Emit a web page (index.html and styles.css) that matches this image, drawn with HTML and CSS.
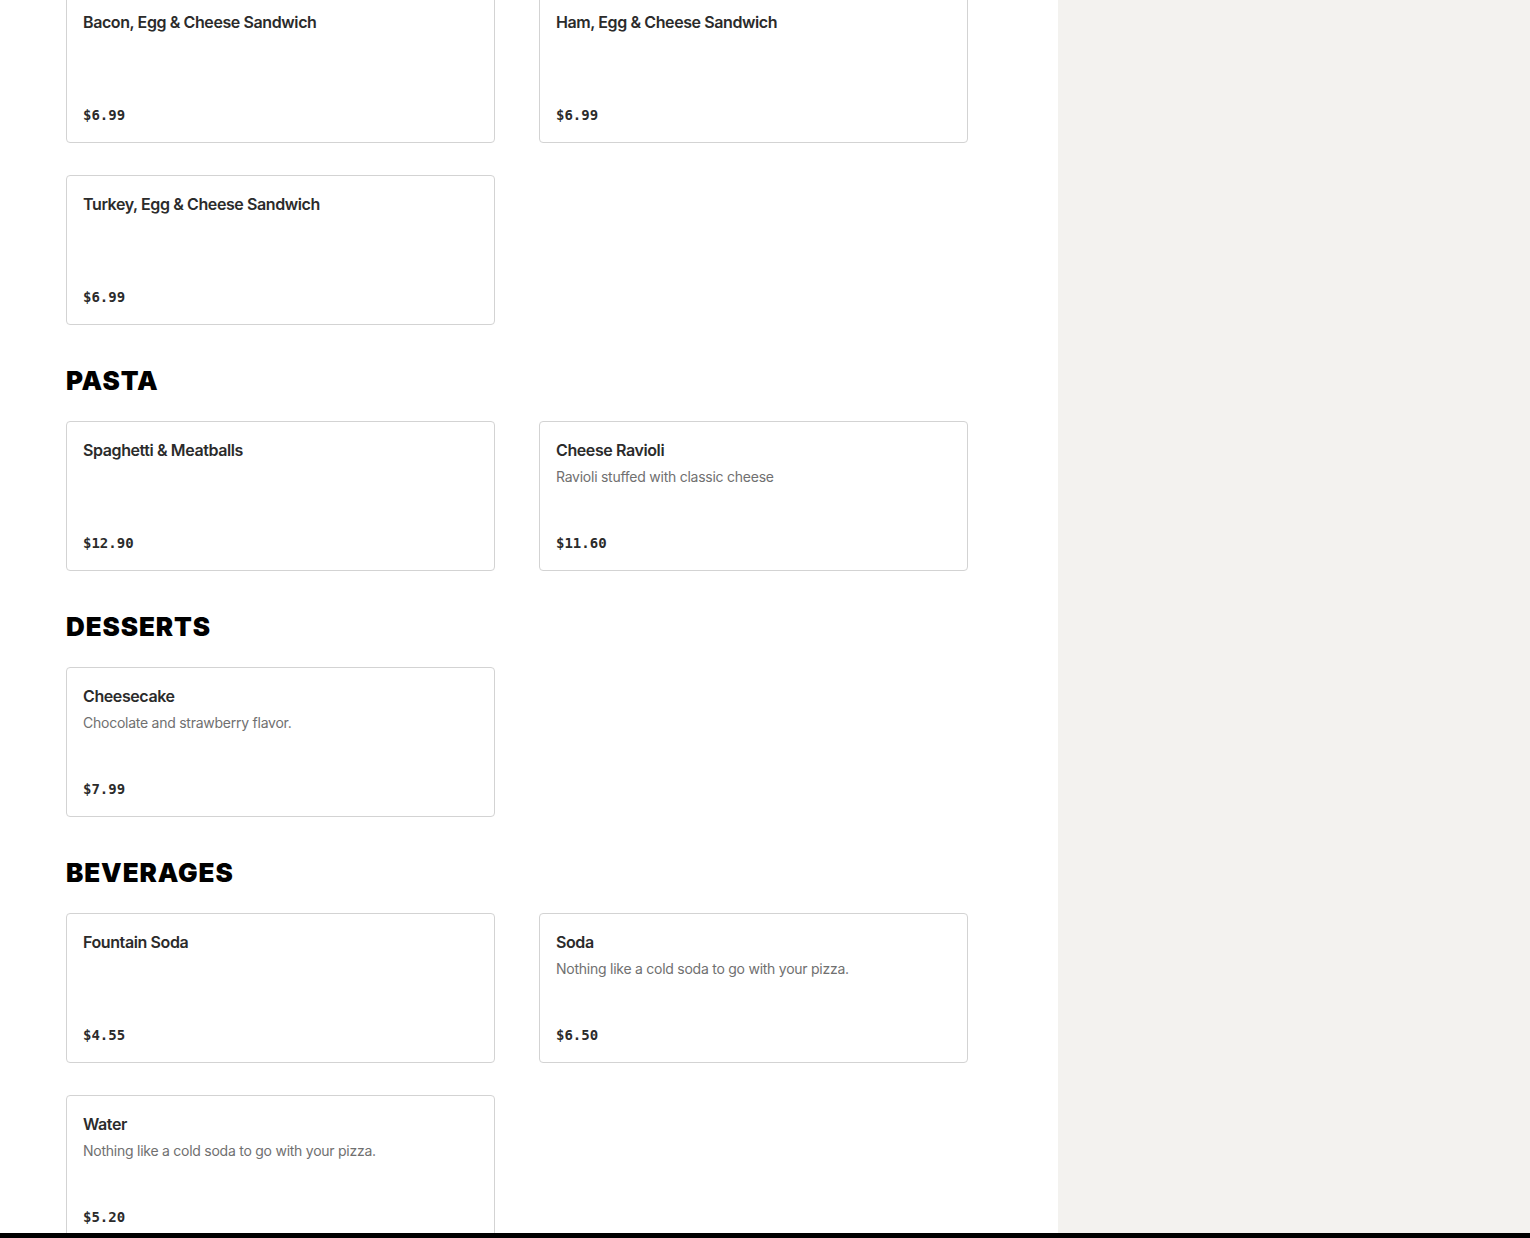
FILE: index.html
```html
<!DOCTYPE html>
<html lang="en">
<head>
<meta charset="utf-8">
<title>Menu</title>
<link rel="stylesheet" href="styles.css">
</head>
<body>
<div class="layout">
  <main class="menu">
    <section class="section section-first">
      <div class="grid">
        <div class="card"><div class="name">Bacon, Egg &amp; Cheese Sandwich</div><div class="price">$6.99</div></div>
        <div class="card"><div class="name">Ham, Egg &amp; Cheese Sandwich</div><div class="price">$6.99</div></div>
        <div class="card"><div class="name">Turkey, Egg &amp; Cheese Sandwich</div><div class="price">$6.99</div></div>
      </div>
    </section>
    <section class="section">
      <h2 class="heading">PASTA</h2>
      <div class="grid">
        <div class="card"><div class="name">Spaghetti &amp; Meatballs</div><div class="price">$12.90</div></div>
        <div class="card"><div class="name">Cheese Ravioli</div><div class="desc">Ravioli stuffed with classic cheese</div><div class="price">$11.60</div></div>
      </div>
    </section>
    <section class="section">
      <h2 class="heading">DESSERTS</h2>
      <div class="grid">
        <div class="card"><div class="name">Cheesecake</div><div class="desc">Chocolate and strawberry flavor.</div><div class="price">$7.99</div></div>
      </div>
    </section>
    <section class="section">
      <h2 class="heading">BEVERAGES</h2>
      <div class="grid">
        <div class="card"><div class="name">Fountain Soda</div><div class="price">$4.55</div></div>
        <div class="card"><div class="name">Soda</div><div class="desc">Nothing like a cold soda to go with your pizza.</div><div class="price">$6.50</div></div>
        <div class="card"><div class="name">Water</div><div class="desc">Nothing like a cold soda to go with your pizza.</div><div class="price">$5.20</div></div>
      </div>
    </section>
  </main>
  <aside class="side"></aside>
</div>
<div class="bottom-bar"></div>
</body>
</html>
```
FILE: styles.css
```css
html, body {
  margin: 0;
  padding: 0;
  height: 1238px;
  overflow: hidden;
  background: #ffffff;
  font-family: Inter, "Liberation Sans", sans-serif;
  color: #2b2b2b;
}

.layout {
  display: flex;
  min-height: 1238px;
}

.menu {
  width: 1058px;
  box-sizing: border-box;
  padding: 0 0 0 66px;
  margin-top: -7px;
}

.side {
  flex: 1;
  background: #f3f2ef;
}

.section {
  margin-top: 40px;
}

.section-first {
  margin-top: 0;
}

.heading {
  margin: 0 0 24px 0;
  font-family: Inter, "Liberation Sans", sans-serif;
  font-weight: 900;
  font-size: 26px;
  line-height: 32px;
  letter-spacing: 0.9px;
  color: #000;
}

.grid {
  display: grid;
  grid-template-columns: 429px 429px;
  column-gap: 44px;
  row-gap: 32px;
}

.card {
  box-sizing: border-box;
  height: 150px;
  border: 1px solid #d3d3d3;
  border-radius: 4px;
  padding: 16px;
  display: flex;
  flex-direction: column;
  background: #fff;
}

.name {
  font-size: 16px;
  font-weight: 600;
  line-height: 24px;
  letter-spacing: -0.4px;
  color: #2b2b2b;
}

.desc {
  margin-top: 5px;
  font-size: 14px;
  line-height: 20px;
  letter-spacing: -0.25px;
  color: #707070;
}

.price {
  margin-top: auto;
  padding-bottom: 2px;
  font-family: "DejaVu Sans Mono", "Liberation Mono", monospace;
  font-weight: 700;
  font-size: 14px;
  line-height: 18px;
  color: #2b2b2b;
}

.bottom-bar {
  position: fixed;
  left: 0;
  right: 0;
  bottom: 0;
  height: 5px;
  background: #000;
}
```
